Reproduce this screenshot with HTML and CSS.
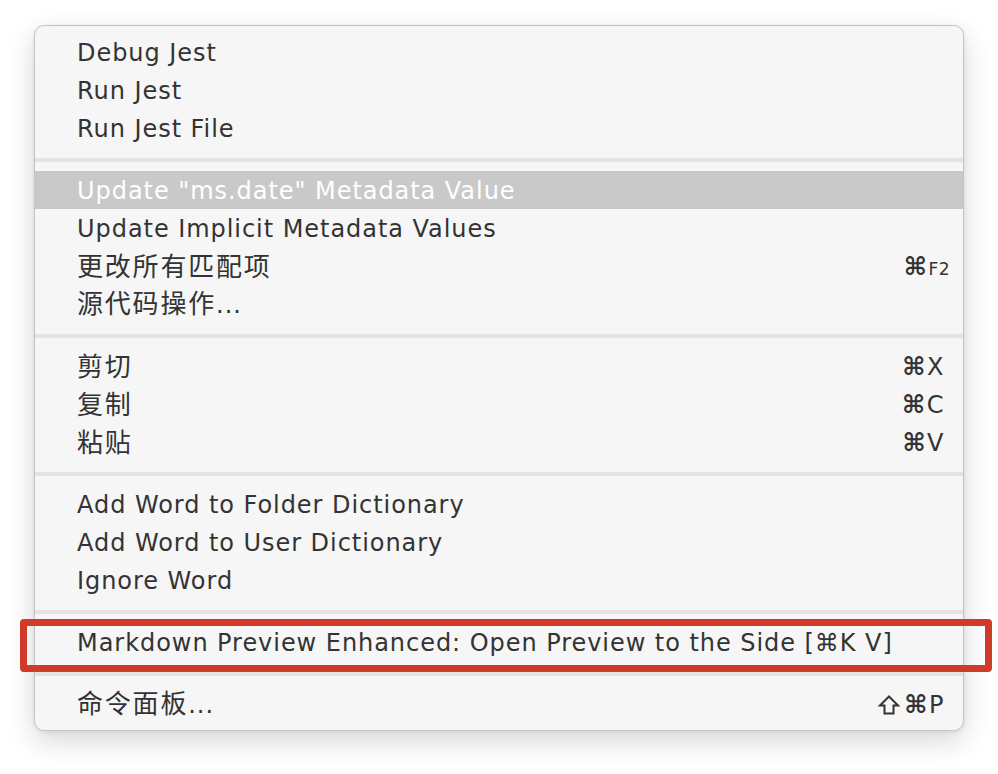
FILE: index.html
```html
<!DOCTYPE html>
<html lang="zh">
<head>
<meta charset="utf-8">
<title>Context Menu</title>
<link rel="stylesheet" href="styles.css">
</head>
<body>
<div class="menu">
  <div class="item"><span class="label">Debug Jest</span></div>
  <div class="item"><span class="label">Run Jest</span></div>
  <div class="item"><span class="label">Run Jest File</span></div>
  <div class="sep"></div>
  <div class="item active"><span class="label">Update "ms.date" Metadata Value</span></div>
  <div class="item"><span class="label">Update Implicit Metadata Values</span></div>
  <div class="item"><span class="label cjk">更改所有匹配项</span><span class="key key-f2"><span class="cmd">⌘</span><small>F2</small></span></div>
  <div class="item"><span class="label cjk">源代码操作<span class="dots">...</span></span></div>
  <div class="sep"></div>
  <div class="item"><span class="label cjk">剪切</span><span class="key"><span class="cmd">⌘</span>X</span></div>
  <div class="item"><span class="label cjk">复制</span><span class="key"><span class="cmd">⌘</span>C</span></div>
  <div class="item"><span class="label cjk">粘贴</span><span class="key"><span class="cmd">⌘</span>V</span></div>
  <div class="sep"></div>
  <div class="item"><span class="label">Add Word to Folder Dictionary</span></div>
  <div class="item"><span class="label">Add Word to User Dictionary</span></div>
  <div class="item"><span class="label">Ignore Word</span></div>
  <div class="sep"></div>
  <div class="item"><span class="label">Markdown Preview Enhanced: Open Preview to the Side [⌘K V]</span></div>
  <div class="sep"></div>
  <div class="item"><span class="label cjk">命令面板<span class="dots">...</span></span><span class="key"><svg class="shift" width="22" height="22" viewBox="0 0 22 22"><path d="M11 2.5 L20 11.5 H15.5 V19.5 H6.5 V11.5 H2 Z" fill="none" stroke="#333333" stroke-width="2" stroke-linejoin="miter"/></svg><span class="cmd">⌘</span>P</span></div>
</div>
<div class="highlight-box"></div>
</body>
</html>
```
FILE: styles.css
```css
html, body {
  margin: 0;
  padding: 0;
  background: #ffffff;
}
body {
  padding: 25px 0 0 34px;
  font-family: "DejaVu Sans", "Noto Sans CJK SC", sans-serif;
  position: relative;
  height: 774px;
  box-sizing: border-box;
}
.menu {
  width: 930px;
  box-sizing: border-box;
  background: #f6f6f6;
  border: 1px solid #c4c4c4;
  border-radius: 10px;
  padding: 7px 0 7px;
  box-shadow: 0 10px 28px rgba(0, 0, 0, 0.16), 0 1px 4px rgba(0, 0, 0, 0.08);
  color: #333333;
  font-size: 24px;
}
.item {
  height: 38px;
  display: flex;
  align-items: center;
  justify-content: space-between;
  padding: 0 19px 0 42px;
  white-space: nowrap;
  line-height: 38px;
}
.label {
  letter-spacing: 0.95px;
  position: relative;
  top: 1px;
}
.label.cjk {
  font-family: "Noto Sans CJK SC", sans-serif;
  font-size: 26px;
  letter-spacing: 1.8px;
  top: -1px;
}
.dots {
  font-family: "DejaVu Sans", sans-serif;
  font-size: 24px;
  letter-spacing: 1px;
}
.item.active {
  background: #c9c9c9;
  color: #ffffff;
}
.key {
  font-family: "DejaVu Sans", sans-serif;
  letter-spacing: 0.5px;
  position: relative;
  top: 1px;
  display: flex;
  align-items: center;
}
.cmd {
  font-size: 25px;
  font-weight: bold;
  margin-right: 1px;
}
.shift {
  display: block;
  margin-right: 4px;
}
.key-f2 {
  margin-right: -6px;
}
.key small {
  font-size: 17px;
  padding-top: 3px;
}
.sep {
  height: 24px;
  box-sizing: border-box;
  padding-top: 11px;
}
.sep::before {
  content: "";
  display: block;
  width: 100%;
  height: 4px;
  background: #e3e3e3;
}
.highlight-box {
  position: absolute;
  left: 20px;
  top: 619px;
  width: 972px;
  height: 53px;
  box-sizing: border-box;
  border: 7px solid #d13a2a;
  border-radius: 4px;
}
```
